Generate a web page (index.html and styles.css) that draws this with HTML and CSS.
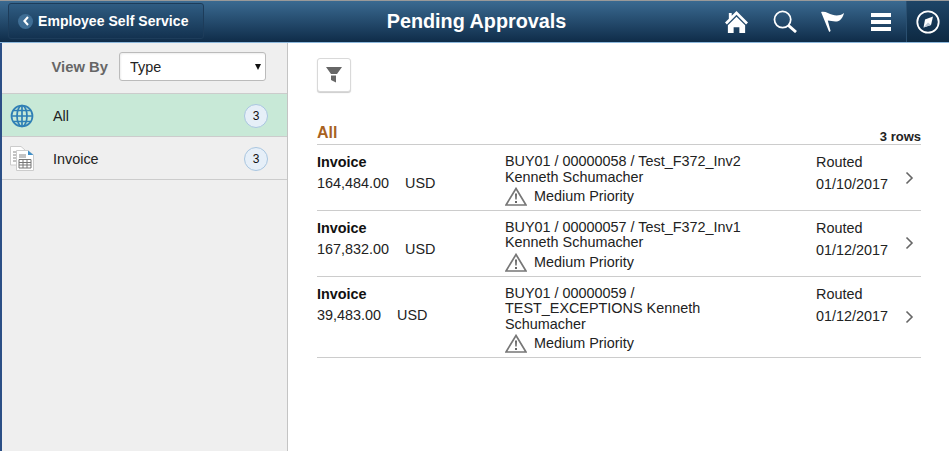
FILE: index.html
```html
<!DOCTYPE html>
<html lang="en">
<head>
  <title>Pending Approvals</title>
  <link rel="stylesheet" href="styles.css">
</head>

<body>
  <header class="banner">
    <a class="back" href="#">
      <span class="back-circle">
        <svg width="10" height="12" viewBox="0 0 10 12"><path d="M7.5 1 L3 6 L7.5 11" fill="none" stroke="#fff" stroke-width="2.6"/></svg>
      </span>
      Employee Self Service
    </a>
    <h1>Pending Approvals</h1>
    <nav class="actions">
      <svg class="home" width="23" height="23" viewBox="0 0 24 24"><path d="M12 1 L24 13 L22 15 L12 5 L2 15 L0 13 L4 9 V3 H7 V6 Z M12 7 L21 16 V24 H15 V18 H9 V24 H3 V16 Z" fill="#fff"/></svg>
      <svg class="search" width="24" height="23" viewBox="0 0 25 24"><circle cx="10" cy="10" r="8.500" fill="none" stroke="#fff" stroke-width="1.800"/><path d="M16 16 L24 23" stroke="#fff" stroke-width="3"/></svg>
      <svg class="flag" width="24" height="21" viewBox="0 0 25 22"><path d="M0 1 C5 0 8 3 12 4 C16 5 20 5 24 2 C23 7 20 11 15 11 C12 11 10 10 7 10 L10 21 L8.500 22 Z" fill="#fff"/></svg>
      <svg class="menu" width="20" height="18" viewBox="0 0 20 18"><path d="M0 0 H20 V4 H0 Z M0 7 H20 V11 H0 Z M0 14 H20 V18 H0 Z" fill="#fff"/></svg>
      <span class="nav-btn">
        <svg width="24" height="24" viewBox="0 0 24 24"><circle cx="12" cy="12" r="10.700" fill="none" stroke="#fff" stroke-width="1.800"/><path d="M17 6.500 L15 15 L7.500 17.500 L9 9.500 Z" fill="#fff"/><path d="M12 12.500 L15 15 L7.500 17.500 Z" fill="#b9c7d3"/></svg>
      </span>
    </nav>
  </header>

  <div class="layout">
    <aside class="side">
      <div class="viewby">
        <label for="viewBy">View By</label>
        <span class="select-wrap">
          <select id="viewBy"><option>Type</option></select>
        </span>
      </div>
      <div class="side-item selected">
        <svg class="side-icon" width="24" height="24" viewBox="0 0 24 24" fill="none" stroke="#2f7fb5" stroke-width="1.700">
          <circle cx="12" cy="12" r="10.500"/>
          <ellipse cx="12" cy="12" rx="5" ry="10.500"/>
          <path d="M12 1.500 V22.500 M1.500 12 H22.500 M3.500 6.500 H20.500 M3.500 17.500 H20.500"/>
        </svg>
        <span class="side-label">All</span>
        <span class="badge">3</span>
      </div>
      <div class="side-item">
        <svg class="side-icon" width="24" height="25" viewBox="0 0 24 25">
          <path d="M.5 .5 H11 L15 4 V19 H.5 Z" fill="#fff" stroke="#ccc"/>
          <path d="M3 6 H6 M3 9 H6 M3 12 H6 M3 15 H6" stroke="#888"/>
          <path d="M6.500 4.500 H18 L23.500 9 V24.500 H6.500 Z" fill="#fff" stroke="#ccc"/>
          <path d="M18 4.500 L23.500 9 H18 Z" fill="#3f8fc8"/>
          <path d="M9 9 H16 M9 11 H16" stroke="#888"/>
          <path d="M9 13.500 H21 V22 H9 Z M9 16.500 H21 M9 19 H21 M13 13.500 V22 M17 13.500 V22" fill="none" stroke="#777"/>
        </svg>
        <span class="side-label">Invoice</span>
        <span class="badge">3</span>
      </div>
    </aside>

    <main class="content">
      <button class="filter" type="button" aria-label="Filter">
        <svg width="16" height="16" viewBox="0 0 16 16"><path d="M0 0 H16 L11 7 H5 Z M5 8.500 H10 V15.500 L5 13 Z" fill="#666"/></svg>
      </button>

      <div class="list-head">
        <h2>All</h2>
        <span class="rows">3 rows</span>
      </div>

      <ul class="list">
        <li class="row">
          <div class="col-type">
            <div class="type">Invoice</div>
            <div class="amount">164,484.00 <span>USD</span></div>
          </div>
          <div class="col-desc">
            <div>BUY01 / 00000058 / Test_F372_Inv2 Kenneth Schumacher</div>
            <div class="priority">
              <svg width="22" height="19" viewBox="0 0 22 19"><path d="M11 1.500 L21 18 H1 Z" fill="#fff" stroke="#777" stroke-width="1.700"/><path d="M10 6.500 H12 L11.700 12.500 H10.300 Z M10 14 H12 V16 H10 Z" fill="#666"/></svg>
              Medium Priority
            </div>
          </div>
          <div class="col-status">
            <div>Routed</div>
            <div class="date">01/10/2017</div>
          </div>
          <svg class="chev" width="9" height="14" viewBox="0 0 9 14"><path d="M1.500 1.500 L7 7 L1.500 12.500" fill="none" stroke="#666" stroke-width="1.600"/></svg>
        </li>
        <li class="row">
          <div class="col-type">
            <div class="type">Invoice</div>
            <div class="amount">167,832.00 <span>USD</span></div>
          </div>
          <div class="col-desc">
            <div>BUY01 / 00000057 / Test_F372_Inv1 Kenneth Schumacher</div>
            <div class="priority">
              <svg width="22" height="19" viewBox="0 0 22 19"><path d="M11 1.500 L21 18 H1 Z" fill="#fff" stroke="#777" stroke-width="1.700"/><path d="M10 6.500 H12 L11.700 12.500 H10.300 Z M10 14 H12 V16 H10 Z" fill="#666"/></svg>
              Medium Priority
            </div>
          </div>
          <div class="col-status">
            <div>Routed</div>
            <div class="date">01/12/2017</div>
          </div>
          <svg class="chev" width="9" height="14" viewBox="0 0 9 14"><path d="M1.500 1.500 L7 7 L1.500 12.500" fill="none" stroke="#666" stroke-width="1.600"/></svg>
        </li>
        <li class="row">
          <div class="col-type">
            <div class="type">Invoice</div>
            <div class="amount">39,483.00 <span>USD</span></div>
          </div>
          <div class="col-desc">
            <div>BUY01 / 00000059 / TEST_EXCEPTIONS Kenneth Schumacher</div>
            <div class="priority">
              <svg width="22" height="19" viewBox="0 0 22 19"><path d="M11 1.500 L21 18 H1 Z" fill="#fff" stroke="#777" stroke-width="1.700"/><path d="M10 6.500 H12 L11.700 12.500 H10.300 Z M10 14 H12 V16 H10 Z" fill="#666"/></svg>
              Medium Priority
            </div>
          </div>
          <div class="col-status">
            <div>Routed</div>
            <div class="date">01/12/2017</div>
          </div>
          <svg class="chev" width="9" height="14" viewBox="0 0 9 14"><path d="M1.500 1.500 L7 7 L1.500 12.500" fill="none" stroke="#666" stroke-width="1.600"/></svg>
        </li>
      </ul>
    </main>
  </div>
</body>
</html>
```

FILE: styles.css
```css
*,
*::before,
*::after {
  box-sizing: border-box;
}

html {
  height: 100%;
}

body {
  margin: 0;
  height: 100%;
  overflow: hidden;
  display: flex;
  flex-direction: column;
  font-family: "Liberation Sans", Arial, sans-serif;
  font-size: 14.4px;
  color: #222;
  background: #fff;
}

/* top bar */
.banner {
  flex: none;
  height: 43px;
  display: flex;
  align-items: center;
  position: relative;
  border-top: 1px solid #999;
  border-bottom: 1px solid #8db8dc;
  padding-left: 8px;
  background: linear-gradient(#3a6a91, #0f2c49);
}

.back {
  width: 196px;
  height: 36px;
  margin-top: -1px;
  display: flex;
  align-items: center;
  gap: 5px;
  padding-left: 9px;
  border: 1px solid #1d3c5a;
  border-radius: 3px;
  background: linear-gradient(#2f5c82, #133250);
  color: #fff;
  font-size: 14px;
  font-weight: bold;
  letter-spacing: .05px;
  text-decoration: none;
}

.back-circle {
  width: 15px;
  height: 15px;
  border-radius: 50%;
  background: #3f6e95;
  display: flex;
  align-items: center;
  justify-content: center;
}

.back-circle svg {
  width: 8px;
  height: 10px;
}

.banner h1 {
  position: absolute;
  left: 4px;
  right: 0;
  top: 8px;
  margin: 0;
  text-align: center;
  color: #fff;
  font-size: 19.8px;
  line-height: 24px;
  font-weight: bold;
  pointer-events: none;
}

.actions {
  margin-left: auto;
  height: 100%;
  display: flex;
  align-items: center;
}

.home { margin-right: 25px; }
.search { margin-right: 24px; }
.flag { margin-right: 26px; }
.menu { margin-right: 15px; }

.nav-btn {
  width: 43px;
  height: 100%;
  display: flex;
  align-items: center;
  justify-content: center;
  background: linear-gradient(#1e4567, #0d2942);
  border-left: 1px solid #2a4f70;
}

/* body */
.layout {
  flex: 1;
  display: flex;
  min-height: 0;
}

.side {
  width: 288px;
  flex: none;
  border-left: 2px solid #2b4f86;
  border-right: 1px solid #c4c4c4;
  background: #efefef;
}

.viewby {
  height: 51px;
  display: flex;
  align-items: center;
  justify-content: flex-end;
  gap: 11px;
  padding-right: 21px;
  padding-bottom: 3px;
  border-bottom: 1px solid #ccc;
}

.viewby label {
  font-size: 14.8px;
  font-weight: bold;
  color: #666;
}

.select-wrap {
  display: block;
  position: relative;
  height: 29px;
}

.select-wrap::after {
  content: "";
  position: absolute;
  right: 5px;
  top: 12px;
  border-left: 3.500px solid transparent;
  border-right: 3.500px solid transparent;
  border-top: 6px solid #111;
  pointer-events: none;
}

.viewby select {
  appearance: none;
  display: block;
  width: 147px;
  height: 29px;
  padding-left: 10px;
  border: 1px solid #bbb;
  border-radius: 3px;
  background: #fff;
  box-shadow: inset 1px 1px 2px #eee;
  font: inherit;
  color: #222;
}

.side-item {
  height: 43px;
  display: flex;
  align-items: center;
  padding: 1px 19px 0 8px;
  border-bottom: 1px solid #ccc;
}

.side-item.selected {
  background: #c8e9d7;
}

.side-icon {
  flex: none;
}

.side-label {
  margin-left: 19px;
  flex: 1;
}

.badge {
  width: 24px;
  height: 24px;
  border-radius: 50%;
  border: 1px solid #a9c6e0;
  background: #e6eff8;
  display: flex;
  align-items: center;
  justify-content: center;
  font-size: 12px;
  color: #111;
}

.content {
  flex: 1;
  padding: 15px 28px 0 29px;
}

.filter {
  width: 34px;
  height: 34px;
  padding: 0;
  display: flex;
  align-items: center;
  justify-content: center;
  border: 1px solid #d9d9d9;
  border-radius: 3px;
  background: #fff;
  box-shadow: 0 1px 1px #ccc;
}

.list-head {
  margin-top: 31px;
  height: 22px;
  display: flex;
  align-items: flex-end;
  justify-content: space-between;
  border-bottom: 1px solid #ccc;
}

.list-head h2 {
  margin: 0 0 1px;
  font-size: 16px;
  line-height: 20px;
  color: #a8621f;
}

.rows {
  font-size: 13px;
  font-weight: bold;
  line-height: 14px;
}

.list {
  margin: 0;
  padding: 0;
  list-style: none;
}

.row {
  display: flex;
  align-items: flex-start;
  padding: 9px 0 3.750px;
  border-bottom: 1px solid #ccc;
}

.col-type {
  width: 188px;
  flex: none;
  margin-top: -1px;
  line-height: 18px;
}

.type {
  font-weight: bold;
  color: #111;
}

.amount {
  margin-top: 3px;
}

.amount span {
  margin-left: 12px;
}

.col-desc {
  width: 265px;
  flex: none;
  line-height: 15.500px;
}

.priority {
  margin-top: 2px;
  display: flex;
  align-items: center;
  gap: 7px;
  line-height: 19px;
}

.col-status {
  width: 89px;
  flex: none;
  margin-top: -1px;
  margin-left: 46px;
  line-height: 18px;
}

.date {
  margin-top: 4px;
}

.chev {
  align-self: center;
  margin-top: -5px;
}
```
